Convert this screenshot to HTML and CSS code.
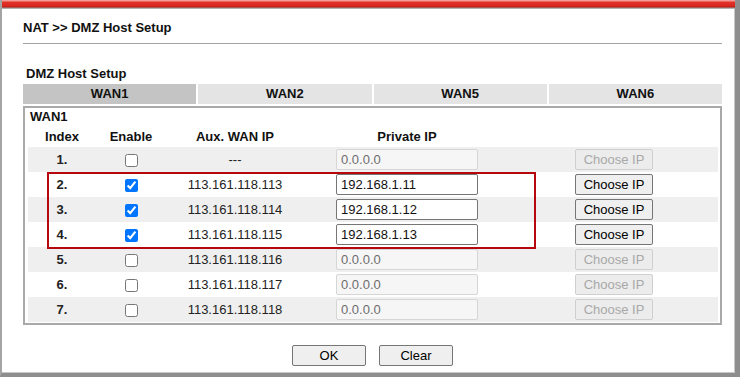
FILE: index.html
```html
<!DOCTYPE html>
<html lang="en">
<head>
  <meta charset="UTF-8">
  <title>NAT &gt;&gt; DMZ Host Setup</title>
  <link rel="stylesheet" href="styles.css">
</head>
<body>
  <div class="window">
    <div class="titlebar"></div>
    <div class="page">
      <h1 class="crumb">NAT &gt;&gt; DMZ Host Setup</h1>
      <div class="section-label">DMZ Host Setup</div>
      <div class="tabs">
        <div class="tab active">WAN1</div>
        <div class="tab">WAN2</div>
        <div class="tab">WAN5</div>
        <div class="tab">WAN6</div>
      </div>
      <div class="panel">
        <div class="panel-title">WAN1</div>
        <table class="hosts">
          <colgroup>
            <col class="c-index">
            <col class="c-enable">
            <col class="c-aux">
            <col class="c-private">
            <col class="c-choose">
          </colgroup>
          <tr class="head">
            <th>Index</th>
            <th>Enable</th>
            <th>Aux. WAN IP</th>
            <th>Private IP</th>
            <th></th>
          </tr>
          <tr class="odd">
            <td class="idx">1.</td>
            <td><input type="checkbox"></td>
            <td>---</td>
            <td><input class="ip" type="text" value="0.0.0.0" disabled></td>
            <td><button class="choose" disabled>Choose IP</button></td>
          </tr>
          <tr>
            <td class="idx">2.</td>
            <td><input type="checkbox" checked></td>
            <td>113.161.118.113</td>
            <td><input class="ip" type="text" value="192.168.1.11"></td>
            <td><button class="choose">Choose IP</button></td>
          </tr>
          <tr class="odd">
            <td class="idx">3.</td>
            <td><input type="checkbox" checked></td>
            <td>113.161.118.114</td>
            <td><input class="ip" type="text" value="192.168.1.12"></td>
            <td><button class="choose">Choose IP</button></td>
          </tr>
          <tr>
            <td class="idx">4.</td>
            <td><input type="checkbox" checked></td>
            <td>113.161.118.115</td>
            <td><input class="ip" type="text" value="192.168.1.13"></td>
            <td><button class="choose">Choose IP</button></td>
          </tr>
          <tr class="odd">
            <td class="idx">5.</td>
            <td><input type="checkbox"></td>
            <td>113.161.118.116</td>
            <td><input class="ip" type="text" value="0.0.0.0" disabled></td>
            <td><button class="choose" disabled>Choose IP</button></td>
          </tr>
          <tr>
            <td class="idx">6.</td>
            <td><input type="checkbox"></td>
            <td>113.161.118.117</td>
            <td><input class="ip" type="text" value="0.0.0.0" disabled></td>
            <td><button class="choose" disabled>Choose IP</button></td>
          </tr>
          <tr class="odd">
            <td class="idx">7.</td>
            <td><input type="checkbox"></td>
            <td>113.161.118.118</td>
            <td><input class="ip" type="text" value="0.0.0.0" disabled></td>
            <td><button class="choose" disabled>Choose IP</button></td>
          </tr>
        </table>
      </div>
      <div class="actions">
        <button class="btn">OK</button>
        <button class="btn">Clear</button>
      </div>
    </div>
    <!-- annotation around the enabled rows -->
    <div class="highlight"></div>
  </div>
</body>
</html>
```

FILE: styles.css
```css
*{
  margin: 0;
  padding: 0;
  box-sizing: border-box;
}
body{
  background: #fff;
  font-family: "Liberation Sans", Arial, sans-serif;
  font-size: 13px;
  color: #111;
}
.window{
  position: relative;
  width: 740px;
  height: 377px;
  border-left: 2px solid #a4a4a4;
  border-right: 5px solid #8e8e8e;
  border-bottom: 4px solid #8e8e8e;
  box-shadow: inset -1px -1px 0 #c8c8c8;
  overflow: hidden;
}
.titlebar{
  height: 9px;
  margin-right: -5px;
  margin-left: -2px;
  background: linear-gradient(#f39a95 0, #f39a95 1px, #e2322b 2px, #d9271f 6px, #b91c17 7px, #9a9a9a 8px, #c9c9c9 9px);
}
.page{
  padding: 0 13px 0 21px;
}
.crumb{
  margin-top: 11px;
  padding-bottom: 7px;
  font-size: 13px;
  line-height: 16px;
  font-weight: bold;
  color: #111;
  border-bottom: 1px solid #a3a3a3;
}
.section-label{
  margin-top: 22px;
  padding-left: 3px;
  line-height: 16px;
  font-weight: bold;
}
.tabs{
  display: flex;
  gap: 2px;
  margin-top: 2px;
}
.tab{
  flex: 1;
  height: 20px;
  line-height: 20px;
  text-align: center;
  font-weight: bold;
  background: #e4e4e4;
}
.tab.active{
  background: #c4c4c4;
}
.panel{
  margin-top: 2px;
  border: 2px solid #a9a9a9;
  padding: 1px 2px 1px 3px;
}
.panel-title{
  line-height: 16px;
  padding-left: 2px;
  font-weight: bold;
}
.hosts{
  width: 690px;
  table-layout: fixed;
  border-collapse: collapse;
}
.c-index{ width: 68px; }
.c-enable{ width: 70px; }
.c-aux{ width: 138px; }
.c-private{ width: 206px; }
.c-choose{ width: 208px; }
.hosts th{
  height: 22px;
  font-weight: bold;
  text-align: center;
  vertical-align: middle;
}
.hosts td{
  height: 25px;
  text-align: center;
  vertical-align: middle;
  color: #222;
}
.hosts tr.odd td{
  background: #efefef;
}
.hosts td.idx{
  font-weight: bold;
}
.hosts input[type="checkbox"]{
  width: 13px;
  height: 13px;
  margin: 0;
  vertical-align: middle;
}
.ip{
  width: 142px;
  height: 21px;
  padding: 0 4px;
  font-family: "Liberation Sans", Arial, sans-serif;
  font-size: 13px;
  color: #111;
  background: #fff;
  border: 1px solid #767676;
  border-radius: 2px;
  vertical-align: middle;
}
.ip:disabled{
  color: #6d6d6d;
  background: #f6f6f6;
  border-color: #d6d6d6;
}
.choose,
.btn{
  height: 21px;
  font-family: "Liberation Sans", Arial, sans-serif;
  font-size: 13px;
  color: #000;
  background: #efefef;
  border: 1px solid #767676;
  border-radius: 2px;
  vertical-align: middle;
}
.choose{
  width: 78px;
}
.choose:disabled{
  color: #a8a8a8;
  border-color: #cfcfcf;
  background: #ececec;
}
.actions{
  display: flex;
  justify-content: center;
  gap: 13px;
  margin-top: 20px;
}
.btn{
  width: 74px;
}
.highlight{
  position: absolute;
  left: 45px;
  top: 172px;
  width: 489px;
  height: 77px;
  border: 2px solid #b5070d;
  pointer-events: none;
}
```
